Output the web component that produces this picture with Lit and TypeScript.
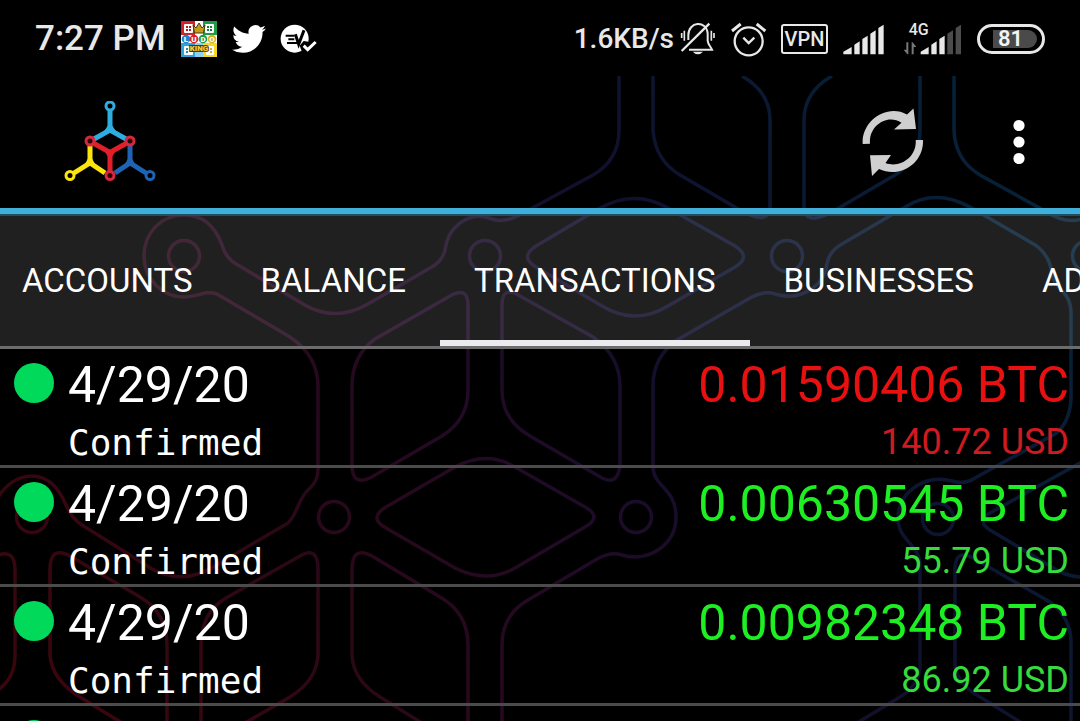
import { LitElement, html, css, svg } from "lit";
import { customElement, property, state } from "lit/decorators.js";
import { classMap } from "lit/directives/class-map.js";

interface Transaction {
  date: string;
  status: string;
  amount: string;
  fiat: string;
  outgoing: boolean;
}

const TRANSACTIONS: Transaction[] = [
  { date: "4/29/20", status: "Confirmed", amount: "0.01590406 BTC", fiat: "140.72 USD", outgoing: true },
  { date: "4/29/20", status: "Confirmed", amount: "0.00630545 BTC", fiat: "55.79 USD", outgoing: false },
  { date: "4/29/20", status: "Confirmed", amount: "0.00982348 BTC", fiat: "86.92 USD", outgoing: false },
  { date: "4/29/20", status: "Confirmed", amount: "0.00412760 BTC", fiat: "36.52 USD", outgoing: false },
];

const TABS = ["ACCOUNTS", "BALANCE", "TRANSACTIONS", "BUSINESSES", "ADDRESS"];

const NODES: [number, number][] = [
  [184, 256], [485, 256], [787, 256], [1088, 256],
  [32, 517], [334, 517], [636, 517], [938, 519],
];

const MESH = [
  "M619 76V130Q619 160 593 175L525 212Q505 224 492 219C470 210 448 226 445 250Q442 262 430 268L368 304Q335 323 303 304L238 265Q226 259 222 245C215 226 202 215 184 215C161 215 144 233 144 256C144 280 163 297 184 297C198 297 205 290 217 294L290 337Q318 356 318 386V466Q319 480 310 488C297 499 298 514 288 523L220 563Q185 587 152 569L82 525Q72 519 66 505C58 486 46 476 32 476C18 476 6 485 -2 497",
  "M653 76V130Q655 160 680 175L740 210Q768 226 770 208V120Q770 92 742 76",
  "M832 76Q804 92 804 120V208Q805 226 832 212L895 175Q920 160 920 130V76",
  "M954 76V130Q955 160 980 175L1047 212Q1065 224 1082 219",
  "M536 246L600 208Q635 189 668 208L735 246Q752 257 735 267L668 306Q635 326 602 306L536 267Q519 257 536 246Z",
  "M502 723V645Q502 615 528 600L597 559Q611 551 622 555C648 563 676 545 676 517C676 487 653 488 653 466V386Q653 357 677 340L750 298Q765 290 775 294C797 301 819 290 826 270Q827 252 842 244L905 207Q935 188 970 207L1030 242Q1050 252 1052 275C1055 290 1070 290 1071 312V400Q1069 424 1055 434L975 478Q965 485 952 481C924 474 898 492 898 519C898 540 920 545 920 565V668Q918 686 900 697L857 723",
  "M352 386V465Q352 486 370 478L442 436Q468 420 468 390V305Q468 286 450 296L375 339Q352 356 352 386Z",
  "M502 390V305Q502 285 520 296L593 337Q620 356 620 386V465Q618 486 602 478L530 436Q502 420 502 390Z",
  "M386 507L455 467Q487 450 515 467L585 507Q603 517 585 527L515 568Q487 584 455 568L386 528Q368 518 386 507Z",
  "M422 723L380 697Q353 680 352 655V570Q352 545 372 556L440 597Q468 613 468 645V723",
  "M245 723L290 697Q317 680 318 655V570Q318 545 300 556L226 598Q201 613 201 645V723",
  "M122 723L80 697Q52 680 50 655V570Q50 545 70 556L140 597Q167 613 167 645V723",
  "M-2 555Q15 549 15 570V655Q15 678 -2 690",
  "M1022 723L980 697Q957 684 955 665V572Q954 548 973 558L1050 602Q1071 618 1071 642V723",
  "M1082 462L990 513Q976 521 990 530L1050 566Q1066 577 1082 577",
];

const backdrop = svg`
  <defs>
    <linearGradient id="mesh" gradientUnits="userSpaceOnUse" x1="60" y1="680" x2="960" y2="100">
      <stop offset="0" stop-color="#3a060d"></stop>
      <stop offset="0.25" stop-color="#2b0817"></stop>
      <stop offset="0.45" stop-color="#220a25"></stop>
      <stop offset="0.68" stop-color="#10102e"></stop>
      <stop offset="1" stop-color="#062238"></stop>
    </linearGradient>
  </defs>
  <g fill="none" stroke="url(#mesh)" stroke-width="3.500">
    ${MESH.map((d) => svg`<path d=${d}></path>`)}
    ${NODES.map(([x, y]) => svg`<circle cx=${x} cy=${y} r="15.5"></circle>`)}
  </g>`;

@customElement("status-bar")
export class StatusBar extends LitElement {
  static styles = css`
    :host {
      display: flex;
      justify-content: space-between;
      align-items: center;
      height: 76px;
      padding: 2px 35px 0;
      box-sizing: border-box;
      color: #e8e8e8;
      font-family: Roboto, sans-serif;
      font-weight: 500;
      background: #000;
    }
    .side {
      display: flex;
      align-items: center;
      gap: 15px;
    }
    .clock {
      font-size: 35px;
      line-height: 40px;
    }
    .speed {
      display: flex;
      align-items: center;
      gap: 6px;
      font-size: 28px;
      line-height: 32px;
    }
    svg {
      display: block;
      overflow: visible;
    }
    .vpn {
      box-sizing: border-box;
      width: 47px;
      border: 2px solid #e8e8e8;
      border-radius: 3px;
      font-size: 20px;
      line-height: 26px;
      text-align: center;
    }
    .battery {
      box-sizing: border-box;
      width: 68px;
      height: 30px;
      border: 3px solid #e8e8e8;
      border-radius: 15px;
      padding: 3px 5px 3px 13px;
    }
    .charge {
      border-radius: 0 9px 9px 0;
      background: #4a4a4a;
      padding-left: 5px;
      font-size: 22px;
      line-height: 18px;
      font-weight: 600;
      color: #f4f4f4;
    }
  `;

  render() {
    return html`
      <div class="side">
        <span class="clock">7:27 PM</span>
        <svg width="36" height="36" viewBox="0 0 36 36" role="img" aria-label="Ludo King">
          <rect width="36" height="36" fill="#fff"></rect>
          <rect width="14" height="14" fill="#d3222a"></rect>
          <rect x="22" width="14" height="14" fill="#1e9a49"></rect>
          <rect y="22" width="14" height="14" fill="#2fa4dc"></rect>
          <rect x="22" y="22" width="14" height="14" fill="#f3d928"></rect>
          <rect x="14" y="22" width="8" height="14" fill="#8fd0ee"></rect>
          <g fill="#fff">
            <rect x="3" y="3" width="9" height="9" rx="1"></rect>
            <rect x="24" y="3" width="9" height="9" rx="1"></rect>
            <rect x="3" y="25" width="9" height="9" rx="1"></rect>
            <rect x="25" y="25" width="8" height="9" rx="1"></rect>
          </g>
          <path d="M5 5h2v2h-2zM8 5h2v2h-2zM5 8h2v2h-2zM8 8h2v2h-2z" fill="#b01c28"></path>
          <path d="M26 5h2v2h-2zM29 5h2v2h-2zM26 8h2v2h-2zM29 8h2v2h-2z" fill="#157a38"></path>
          <path d="M5 27h2v2h-2zM5 30h2v2h-2z" fill="#2587bd"></path>
          <path d="M29 27h2v2h-2zM29 30h2v2h-2z" fill="#d3b81a"></path>
          <path d="M12 4l3 3 3-5 3 5 3-3-1.500 8h-9z" fill="#c89a1c" stroke="#4d3a08" stroke-width="1"></path>
          <rect y="14" width="36" height="8" fill="#fff"></rect>
          <circle cx="5" cy="18" r="4.300" fill="#1c83c9"></circle>
          <circle cx="13" cy="18" r="4.300" fill="#d3222a"></circle>
          <circle cx="22" cy="18" r="4.300" fill="#1e9a49"></circle>
          <circle cx="31" cy="18" r="4.300" fill="#d9b31c"></circle>
          <g font-size="8" font-weight="900" fill="#fff" text-anchor="middle">
            <text x="5" y="21">L</text>
            <text x="13" y="21">U</text>
            <text x="22" y="21">D</text>
            <text x="31" y="21">O</text>
          </g>
          <text x="18" y="30" font-size="8" font-weight="900" text-anchor="middle" fill="#f2cf3a" stroke="#4d3a08" stroke-width="2" paint-order="stroke">KING</text>
        </svg>
        <svg width="34" height="36" viewBox="0 0 24 24" role="img" aria-label="Twitter">
          <path fill="#fff" d="M23.953 4.570a10 10 0 01-2.825.775 4.958 4.958 0 002.163-2.723c-.951.555-2.005.959-3.127 1.184a4.920 4.920 0 00-8.384 4.482C7.690 8.095 4.067 6.130 1.640 3.162a4.822 4.822 0 00-.666 2.475c0 1.710.870 3.213 2.188 4.096a4.904 4.904 0 01-2.228-.616v.060a4.923 4.923 0 003.946 4.827 4.996 4.996 0 01-2.212.085 4.936 4.936 0 004.604 3.417 9.867 9.867 0 01-6.102 2.105c-.390 0-.779-.023-1.170-.067a13.995 13.995 0 007.557 2.209c9.053 0 13.998-7.496 13.998-13.985 0-.210 0-.420-.015-.630A9.935 9.935 0 0024 4.590z"></path>
        </svg>
        <svg width="36" height="30" viewBox="840 70 108 88" role="img" aria-label="EV check">
          <circle cx="881" cy="113" r="42" fill="#fff"></circle>
          <path fill="none" stroke="#000" stroke-width="6" d="M854 104H880M862 115H880M858 126H888"></path>
          <path fill="none" stroke="#000" stroke-width="9" d="M883 100L893 130L909 88"></path>
          <path fill="#000" d="M950 100L922 122L908 120L896 134L906 160H950Z"></path>
          <path fill="none" stroke="#fff" stroke-width="9" d="M908 134L920 146L944 123"></path>
        </svg>
      </div>
      <div class="side">
        <span class="speed">
          1.6KB/s
          <svg width="36" height="34" viewBox="361 64 108 102" fill="none" stroke="#e8e8e8" stroke-width="6" role="img" aria-label="Silent">
            <path d="M386 118V104C386 62 440 58 444 98V120C445 132 452 136 457 147H388"></path>
            <path d="M366 151L449 69" stroke-width="7"></path>
            <path d="M366 97V112M374 90V120M455 90V120M463 97V112" stroke-width="5"></path>
            <path d="M399 153H430Q415 169 399 153Z" fill="#e8e8e8" stroke="none"></path>
          </svg>
        </span>
        <svg width="35" height="35" viewBox="514 62 105 105" fill="none" stroke="#e8e8e8" stroke-width="7" role="img" aria-label="Alarm">
          <circle cx="567" cy="120" r="42"></circle>
          <path d="M551 109L567 125L584 109"></path>
          <path d="M517 89L543 68M591 68L617 89" stroke-width="9"></path>
        </svg>
        <span class="vpn">VPN</span>
        <svg width="41" height="33" viewBox="67 62 123 99" fill="#e8e8e8" role="img" aria-label="Signal">
          <path d="M68 156V148L93 134V156ZM101 156V127L117 117V156ZM125 156V110L141 100V156ZM149 156V94L165 84V156ZM173 156V77L189 67V156Z"></path>
        </svg>
        <svg width="63" height="33" viewBox="238 62 189 99" fill="#e8e8e8" role="img" aria-label="4G signal">
          <text x="267" y="98" font-size="48">4G</text>
          <path d="M303 156V148L327 134V156ZM335 156V127L351 117V156ZM359 156V110L375 100V156Z"></path>
          <path fill="#4c4c4c" d="M383 156V94L400 84V156ZM408 156V77L424 67V156Z"></path>
          <path fill="#777" d="M260 120H266V156H263L252 142H260ZM276 156V120H279L290 134H282V156Z"></path>
        </svg>
        <div class="battery"><div class="charge">81</div></div>
      </div>
    `;
  }
}

@customElement("tx-row")
export class TxRow extends LitElement {
  static styles = css`
    :host {
      display: block;
    }
    .row {
      display: grid;
      grid-template-columns: 40px 1fr auto;
      column-gap: 14px;
      padding: 7px 11px 0 14px;
      border-bottom: 3px solid #4b4b4b;
      color: #fff;
      font-family: Roboto, sans-serif;
    }
    .dot {
      width: 40px;
      height: 40px;
      margin-top: 7px;
      border-radius: 50%;
      background: #00d95a;
    }
    .col {
      display: flex;
      flex-direction: column;
      gap: 6px;
    }
    .main {
      font-size: 50px;
      line-height: 58px;
    }
    .sub {
      font-size: 36px;
      line-height: 45px;
    }
    .mono {
      font-family: "DejaVu Sans Mono", monospace;
    }
    .sum {
      text-align: right;
      color: #1eef22;
    }
    .sum .sub {
      color: #35dc3c;
    }
    .sum.out {
      color: #e81010;
    }
    .sum.out .sub {
      color: #cf1a20;
    }
  `;

  @property({ attribute: false }) tx!: Transaction;

  render() {
    const { date, status, amount, fiat, outgoing } = this.tx;
    return html`
      <div class="row">
        <div class="dot"></div>
        <div class="col">
          <span class="main">${date}</span>
          <span class="sub mono">${status}</span>
        </div>
        <div class=${classMap({ col: true, sum: true, out: outgoing })}>
          <span class="main">${amount}</span>
          <span class="sub">${fiat}</span>
        </div>
      </div>
    `;
  }
}

@customElement("app-root")
export class AppRoot extends LitElement {
  static styles = css`
    :host {
      display: block;
      position: relative;
      height: 100vh;
      overflow: hidden;
      background: #000;
      font-family: Roboto, sans-serif;
    }
    .backdrop {
      position: absolute;
      inset: 0;
      width: 100%;
      height: 100%;
    }
    .screen {
      position: relative;
    }
    button {
      margin: 0;
      padding: 0;
      border: 0;
      background: none;
      color: inherit;
      font: inherit;
    }
    svg {
      display: block;
    }
    .bar {
      display: flex;
      align-items: center;
      justify-content: space-between;
      height: 132px;
      padding: 0 55px 0 64px;
    }
    .actions {
      display: flex;
      align-items: center;
      gap: 89px;
    }
    .accent {
      height: 6px;
      background: #40b0da;
      border-bottom: 2px solid #1b5066;
    }
    .tabs {
      display: flex;
      height: 130px;
      overflow: hidden;
      background: rgba(255, 255, 255, 0.125);
      border-bottom: 3px solid #6c6c6c;
    }
    .strip {
      display: flex;
      margin-left: -12px;
    }
    .tab {
      padding: 6px 34px 0;
      border-bottom: 6px solid transparent;
      color: #fff;
      font-size: 33px;
      line-height: 40px;
      white-space: nowrap;
    }
    .tab.active {
      border-bottom-color: #ebebef;
    }
    .list {
      margin: 0;
      padding: 0;
      list-style: none;
    }
  `;

  @state() private active = 2;

  render() {
    return html`
      <svg class="backdrop" viewBox="0 0 1080 721" preserveAspectRatio="xMidYMin slice" aria-hidden="true">${backdrop}</svg>
      <div class="screen">
        <status-bar></status-bar>
        <header class="bar">
          <svg width="92" height="82" viewBox="64 101 92 82" fill="none" stroke-width="5" role="img" aria-label="Wallet">
            <path stroke="#2fade0" d="M110 111V130M94 139L110 130L126 139"></path>
            <path stroke="#2fade0" stroke-width="3" fill="#2fade0" d="M106 131L110 125L114 131Z"></path>
            <path stroke="#fbe50c" d="M90 146V163M74 173L90 163L105 173"></path>
            <path stroke="#fbe50c" stroke-width="3" fill="#fbe50c" d="M87 163.500L90 158L93 163.500Z"></path>
            <path stroke="#1f63b4" d="M130 146V163M146 173L130 163L115 173"></path>
            <path stroke="#1f63b4" stroke-width="3" fill="#1f63b4" d="M127 163.500L130 158L133 163.500Z"></path>
            <path stroke="#e01f2a" d="M94 143.500L110 152.500L126 143.500M110 152V171"></path>
            <path stroke="#e01f2a" stroke-width="3" fill="#e01f2a" d="M107 152.500L110 157L113 152.500Z"></path>
            <g stroke-width="3">
              <circle cx="110" cy="106" r="4" stroke="#2fade0"></circle>
              <circle cx="70" cy="175.500" r="4" stroke="#fbe50c"></circle>
              <circle cx="150" cy="175.500" r="4" stroke="#1f63b4"></circle>
              <circle cx="90" cy="141" r="4" stroke="#d8283c" fill="#2a0508"></circle>
              <circle cx="130" cy="141" r="4" stroke="#d8283c" fill="#2a0508"></circle>
              <circle cx="110" cy="175.500" r="4" stroke="#d8283c" fill="#2a0508"></circle>
            </g>
          </svg>
          <div class="actions">
            <button aria-label="Refresh">
              <svg width="62" height="68" viewBox="862 108 62 68" fill="#cfcfcf">
                <path d="M862.700 144C861 121 887 103 907 114.500L913.500 108.500L916 129L894 129.500L901.500 122.700C887 113.500 868.500 126 870 143.700Z"></path>
                <path d="M915.700 140H923C924 163 900 179 879 169L872 176L870 155.300L891 155L885.500 163C899 168.500 917 158 915.700 140Z"></path>
              </svg>
            </button>
            <button aria-label="More options">
              <svg width="12" height="46" viewBox="0 0 12 46" fill="#fff">
                <circle cx="6" cy="6.500" r="5.600"></circle>
                <circle cx="6" cy="23" r="5.600"></circle>
                <circle cx="6" cy="39.500" r="5.600"></circle>
              </svg>
            </button>
          </div>
        </header>
        <div class="accent"></div>
        <nav class="tabs">
          <div class="strip" role="tablist">
            ${TABS.map(
              (label, i) => html`<button
                role="tab"
                aria-selected=${i === this.active ? "true" : "false"}
                class=${classMap({ tab: true, active: i === this.active })}
                @click=${() => (this.active = i)}
              >${label}</button>`
            )}
          </div>
        </nav>
        <ul class="list">
          ${TRANSACTIONS.map((tx) => html`<li><tx-row .tx=${tx}></tx-row></li>`)}
        </ul>
      </div>
    `;
  }
}
